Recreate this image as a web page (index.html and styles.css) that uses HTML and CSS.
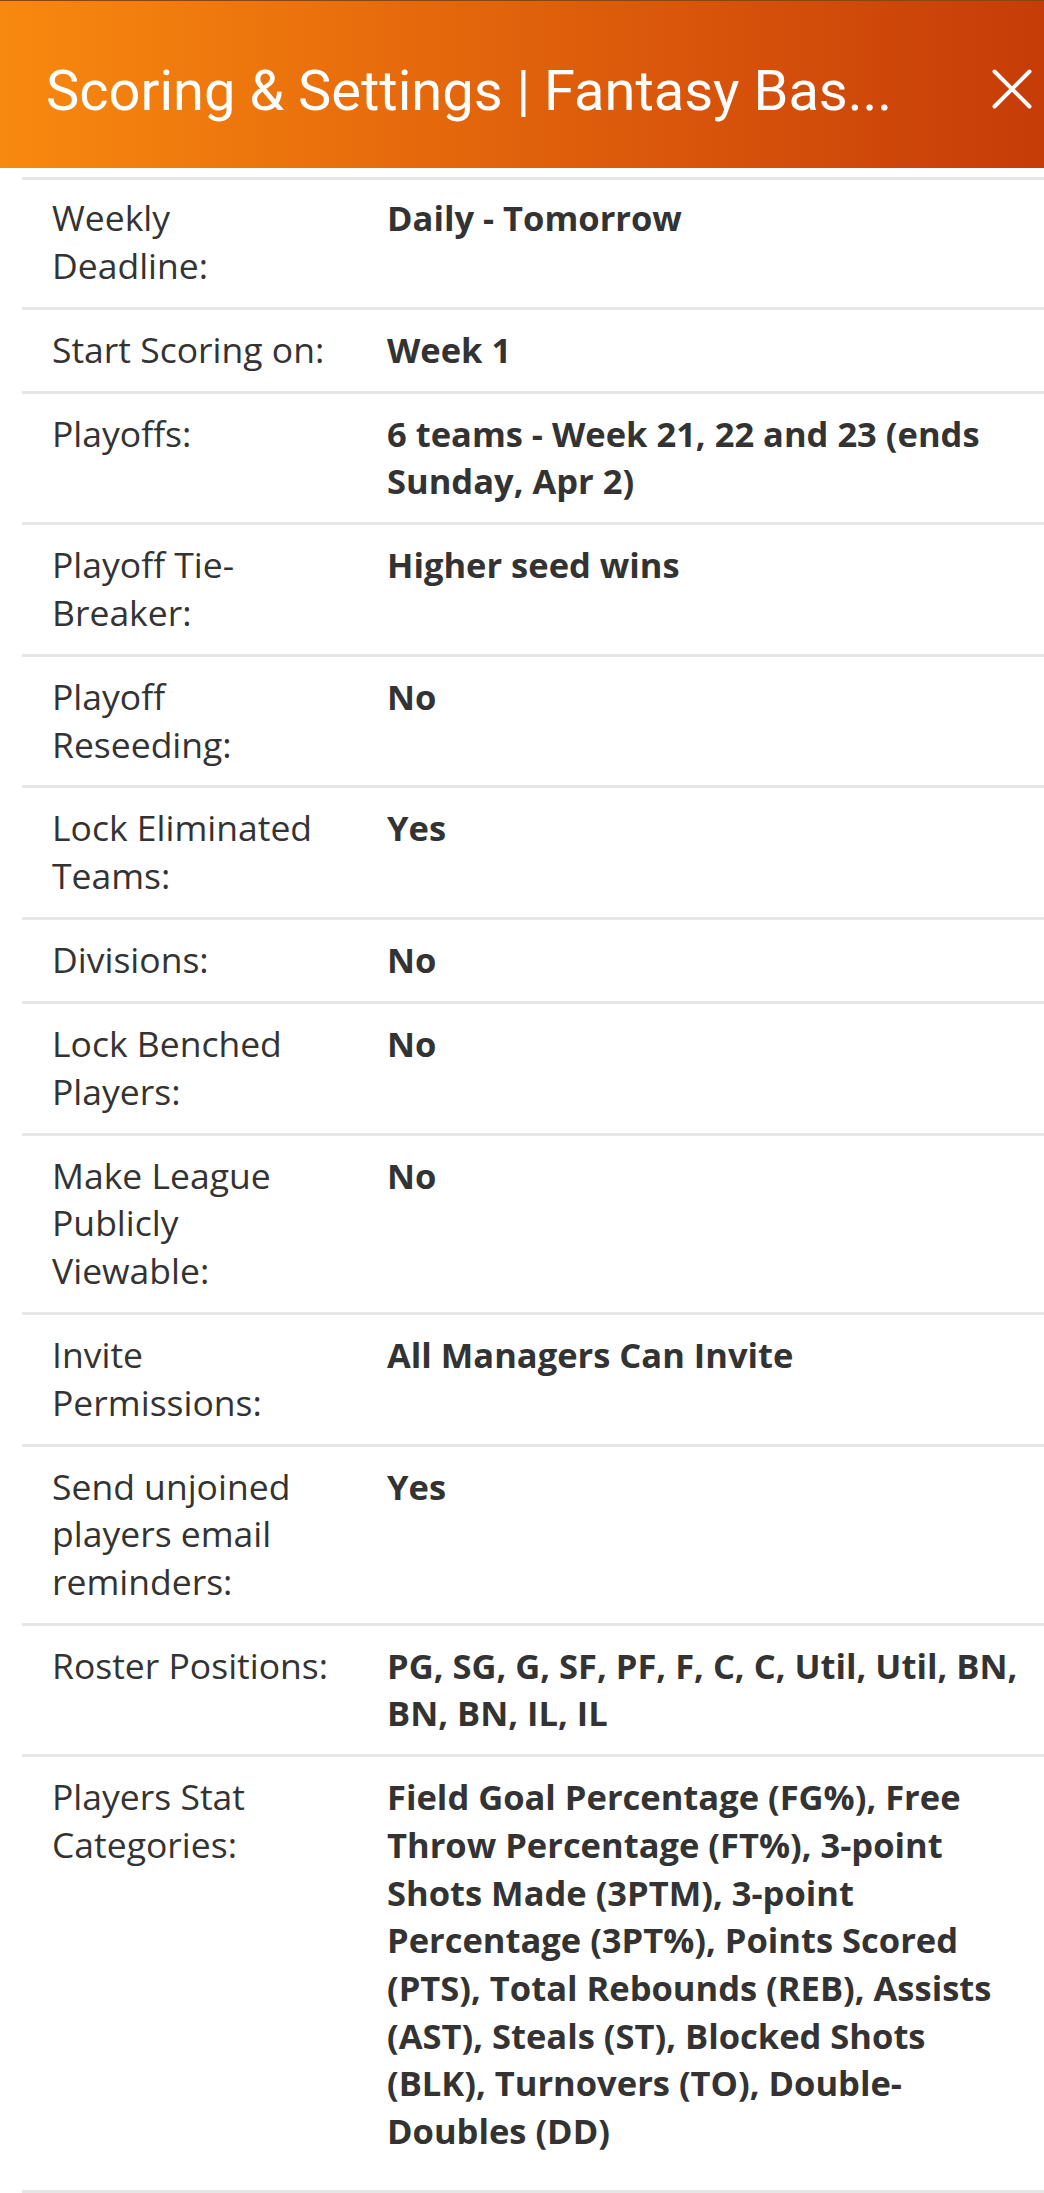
FILE: index.html
```html
<!DOCTYPE html>
<html lang="en">
<head>
<meta charset="utf-8">
<title>Scoring &amp; Settings | Fantasy Basketball</title>
<link rel="stylesheet" href="styles.css">
</head>
<body>
<header class="topbar">
  <h1 class="title">Scoring &amp; Settings | Fantasy Bas...</h1>
  <button class="close" aria-label="Close">
    <svg viewBox="0 0 40 40" width="40" height="40"><path d="M2.5 2.5 L37.5 37.5 M37.5 2.5 L2.5 37.5" stroke="#fff" stroke-width="4" stroke-linecap="round" fill="none"/></svg>
  </button>
</header>
<main class="settings">
  <div class="row first"><div class="label">Weekly Deadline:</div><div class="value">Daily - Tomorrow</div></div>
  <div class="row"><div class="label">Start Scoring on:</div><div class="value">Week 1</div></div>
  <div class="row"><div class="label">Playoffs:</div><div class="value">6 teams - Week 21, 22 and 23 (ends Sunday, Apr 2)</div></div>
  <div class="row"><div class="label">Playoff Tie-Breaker:</div><div class="value">Higher seed wins</div></div>
  <div class="row"><div class="label">Playoff Reseeding:</div><div class="value">No</div></div>
  <div class="row"><div class="label">Lock Eliminated Teams:</div><div class="value">Yes</div></div>
  <div class="row"><div class="label">Divisions:</div><div class="value">No</div></div>
  <div class="row"><div class="label">Lock Benched Players:</div><div class="value">No</div></div>
  <div class="row"><div class="label">Make League Publicly Viewable:</div><div class="value">No</div></div>
  <div class="row"><div class="label">Invite Permissions:</div><div class="value">All Managers Can Invite</div></div>
  <div class="row"><div class="label">Send unjoined players email reminders:</div><div class="value">Yes</div></div>
  <div class="row"><div class="label">Roster Positions:</div><div class="value">PG, SG, G, SF, PF, F, C, C, Util, Util, BN, BN, BN, IL, IL</div></div>
  <div class="row last"><div class="label">Players Stat Categories:</div><div class="value">Field Goal Percentage (FG%), Free Throw Percentage (FT%), 3-point Shots Made (3PTM), 3-point Percentage (3PT%), Points Scored (PTS), Total Rebounds (REB), Assists (AST), Steals (ST), Blocked Shots (BLK), Turnovers (TO), Double-Doubles (DD)</div></div>
</main>
</body>
</html>
```
FILE: styles.css
```css
html, body {
  margin: 0;
  padding: 0;
  background: #fff;
}
body {
  width: 1044px;
  overflow: hidden;
  font-family: "Open Sans", "Liberation Sans", sans-serif;
  color: #333;
}
.topbar {
  height: 168px;
  box-sizing: border-box;
  border-top: 1px solid #8a4514;
  background: linear-gradient(90deg, #f8890f 0%, #e86d0c 35%, #d9560b 65%, #c63c08 100%);
  display: flex;
  align-items: center;
  padding: 0 12px 0 46px;
}
.title {
  margin: 12px 0 0 0;
  flex: 1;
  font-family: Roboto, "Liberation Sans", sans-serif;
  font-weight: 400;
  font-size: 56px;
  line-height: 64px;
  color: #fff;
  white-space: nowrap;
  overflow: hidden;
}
.close {
  width: 40px;
  height: 40px;
  margin: 8px 0 0 0;
  padding: 0;
  border: 0;
  background: transparent;
  display: flex;
  align-items: center;
  justify-content: center;
}
.settings {
  margin: 9px 0 0 22px;
  border-top: 3px solid #e6e6e6;
}
.row {
  display: grid;
  grid-template-columns: 335px 640px;
  padding: 16px 0 17.3px 30px;
  border-bottom: 3px solid #e6e6e6;
  line-height: 47.65px;
}
.label {
  font-weight: 400;
  font-size: 35.5px;
  padding-right: 55px;
}
.value {
  font-weight: 700;
  font-size: 34.5px;
}
.row.first {
  padding-top: 14.1px;
}
.row.last {
  padding-bottom: 35.5px;
}
```
